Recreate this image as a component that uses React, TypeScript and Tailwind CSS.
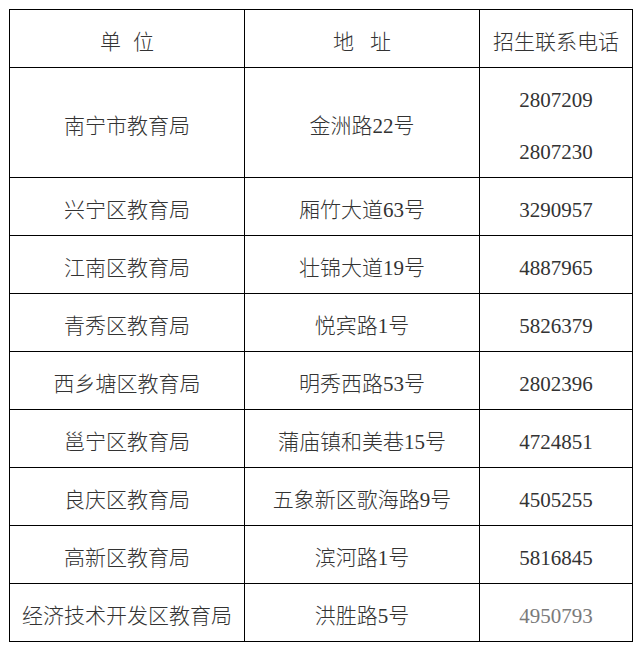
const ROWS: { unit: string; addr: string; phones: string[]; faint?: boolean }[] = [
  { unit: "南宁市教育局", addr: "金洲路22号", phones: ["2807209", "2807230"] },
  { unit: "兴宁区教育局", addr: "厢竹大道63号", phones: ["3290957"] },
  { unit: "江南区教育局", addr: "壮锦大道19号", phones: ["4887965"] },
  { unit: "青秀区教育局", addr: "悦宾路1号", phones: ["5826379"] },
  { unit: "西乡塘区教育局", addr: "明秀西路53号", phones: ["2802396"] },
  { unit: "邕宁区教育局", addr: "蒲庙镇和美巷15号", phones: ["4724851"] },
  { unit: "良庆区教育局", addr: "五象新区歌海路9号", phones: ["4505255"] },
  { unit: "高新区教育局", addr: "滨河路1号", phones: ["5816845"] },
  { unit: "经济技术开发区教育局", addr: "洪胜路5号", phones: ["4950793"], faint: true },
];

const cell = "flex items-center justify-center bg-white pt-2 whitespace-nowrap";

export default function App() {
  return (
    <main
      className="min-h-screen bg-white text-[21px] font-light leading-none text-[#333]"
      style={{ fontFamily: '"Liberation Serif", "Noto Sans CJK SC", serif' }}
    >
      <div className="pl-[9px] pt-[9px]">
        <div className="grid w-fit grid-cols-[234px_234px_152px] grid-rows-[57px_109px_repeat(8,57px)] gap-px bg-black p-px">
          <div className={cell}>
            <span>单</span>
            <span className="ml-[12px]">位</span>
          </div>
          <div className={cell}>
            <span>地</span>
            <span className="ml-[16px]">址</span>
          </div>
          <div className={cell}>招生联系电话</div>

          {ROWS.map((r) => (
            <div className="contents" key={r.unit}>
              <div className={cell}>{r.unit}</div>
              <div className={cell}>{r.addr}</div>
              <div className={`${cell} flex-col gap-[31px] ${r.faint ? "text-[#7a7a7a]" : ""}`}>
                {r.phones.map((p) => (
                  <span key={p}>{p}</span>
                ))}
              </div>
            </div>
          ))}
        </div>
      </div>
    </main>
  );
}
